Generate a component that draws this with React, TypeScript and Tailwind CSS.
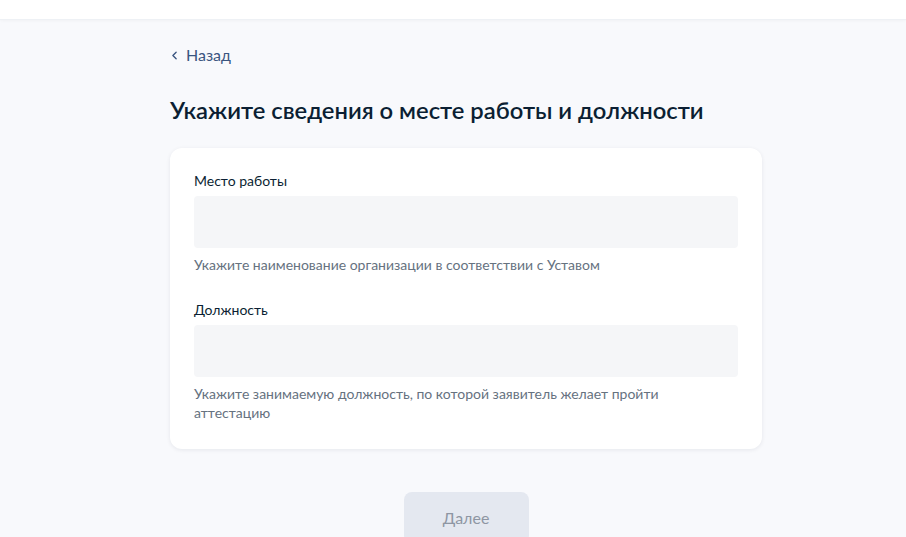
import { ChevronLeft } from 'lucide-react';

type FieldProps = {
    label: string;
    hint: string;
};

function Field({ label, hint }: FieldProps) {
    return (
        <div className="flex flex-col">
            <label className="text-[14px] leading-[20px] text-[#0b1f33]">{label}</label>
            <div className="mt-[5px] h-[52px] rounded-[4px] bg-[#f5f6f8]" />
            <p className="mt-[7px] text-[14px] leading-[19px] text-[#66727f] pr-[70px]">{hint}</p>
        </div>
    );
}

export default function App() {
    return (
        <div
            className="min-h-[537px] bg-[#f8f9fc] overflow-hidden"
            style={{ fontFamily: 'Lato, "Open Sans", sans-serif' }}
        >
            {/* Header strip (cut off at the top of the shot) */}
            <div className="h-[20px] bg-white border-b border-[#eef1f5] shadow-[0_1px_3px_rgba(0,0,0,0.03)]" />

            <div className="pl-[170px] w-[762px]">
                {/* Back link */}
                <a className="mt-[25px] flex items-center gap-[5px] text-[#3a5580] text-[16px] leading-[20px]">
                    <ChevronLeft className="w-[13px] h-[13px] -ml-[2px]" strokeWidth={2.5} />
                    <span>Назад</span>
                </a>

                <h1 className="mt-[29px] text-[23.8px] leading-[32px] font-semibold text-[#0b1f33]">
                    Укажите сведения о месте работы и должности
                </h1>

                {/* Form card */}
                <div className="mt-[22px] rounded-[12px] bg-white px-[24px] pt-[23px] pb-[27px] shadow-[0_1px_4px_rgba(14,31,53,0.08)] flex flex-col gap-[26px]">
                    <Field
                        label="Место работы"
                        hint="Укажите наименование организации в соответствии с Уставом"
                    />
                    <Field
                        label="Должность"
                        hint="Укажите занимаемую должность, по которой заявитель желает пройти аттестацию"
                    />
                </div>

                <div className="mt-[43px] flex justify-center">
                    <button className="w-[125px] h-[52px] rounded-[8px] bg-[#e4e8f0] text-[16px] text-[#8e96a3]">
                        Далее
                    </button>
                </div>
            </div>
        </div>
    );
}
